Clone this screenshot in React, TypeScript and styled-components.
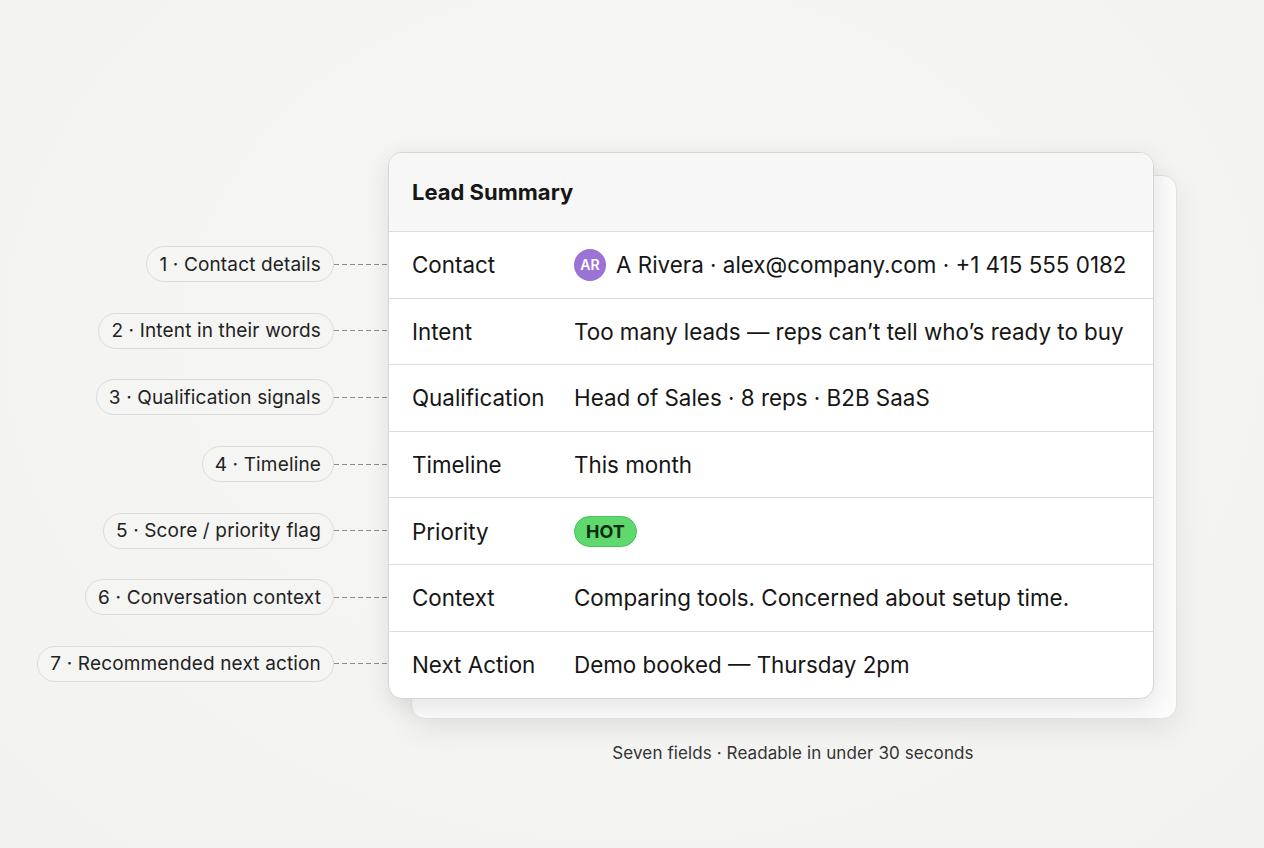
import React from "react";
import styled, { createGlobalStyle } from "styled-components";

const GlobalStyle = createGlobalStyle`
  body {
    margin: 0;
    background: #f4f4f3;
    font-family: Inter, "Noto Sans", sans-serif;
    color: #161616;
  }
`;

const Page = styled.div`
  width: 1264px;
  height: 848px;
  padding-top: 152px;
  box-sizing: border-box;
  display: flex;
  background: radial-gradient(ellipse at 50% 40%, #f7f7f6 0%, #f2f2f1 100%);
`;

const Annotations = styled.div`
  width: 388px;
  padding-top: 79px;
  display: flex;
  flex-direction: column;
  align-items: flex-end;
`;

const AnnotationRow = styled.div`
  height: 66.6px;
  display: flex;
  align-items: center;
`;

const Pill = styled.div`
  height: 34px;
  padding: 0 12px;
  display: flex;
  align-items: center;
  border: 1px solid #dcdcdc;
  border-radius: 18px;
  background: #f5f5f4;
  font-size: 19px;
  letter-spacing: 0.15px;
  color: #222;
  white-space: nowrap;
`;

const Dash = styled.div`
  width: 54px;
  height: 1px;
  background: repeating-linear-gradient(90deg, #8a8a8a 0 5px, transparent 5px 8px);
`;

const Stack = styled.div`
  position: relative;
  display: flex;
  flex-direction: column;
`;

const BackCard = styled.div`
  position: absolute;
  left: 23px;
  top: 23px;
  width: 764px;
  height: 542px;
  background: #fbfbfb;
  border: 1px solid #e2e2e2;
  border-radius: 14px;
  box-shadow: 0 10px 30px rgba(0, 0, 0, 0.08);
`;

const Card = styled.div`
  position: relative;
  width: 764px;
  background: #fff;
  border: 1px solid #d6d6d6;
  border-radius: 14px;
  overflow: hidden;
  box-shadow: 0 6px 24px rgba(0, 0, 0, 0.1);
`;

const Header = styled.div`
  height: 78px;
  padding: 0 23px;
  display: flex;
  align-items: center;
  background: #f7f7f7;
  border-bottom: 1px solid #dcdcdc;
  font-size: 22px;
  font-weight: 700;
`;

const Row = styled.div<{ last?: boolean }>`
  height: 66.6px;
  box-sizing: border-box;
  padding: 0 23px;
  display: flex;
  align-items: center;
  font-size: 22.4px;
  border-bottom: ${(p) => (p.last ? "none" : "1px solid #dcdcdc")};
`;

const Label = styled.div`
  width: 162px;
  flex-shrink: 0;
`;

const Value = styled.div`
  display: flex;
  align-items: center;
  gap: 10px;
  white-space: nowrap;
`;

const Avatar = styled.div`
  width: 32px;
  height: 32px;
  border-radius: 50%;
  background: #9b72d6;
  color: #fff;
  font-size: 14px;
  font-weight: 600;
  display: flex;
  align-items: center;
  justify-content: center;
`;

const Hot = styled.span`
  padding: 4px 11px;
  border-radius: 16px;
  background: #5fd86d;
  border: 1px solid #48c257;
  font-size: 18px;
  font-weight: 700;
  color: #0e2a12;
`;

const Caption = styled.div`
  margin-top: 44px;
  padding-left: 44px;
  text-align: center;
  font-size: 17px;
  letter-spacing: 0.1px;
  color: #333;
`;

const fields: { note: string; label: string; value: React.ReactNode }[] = [
  {
    note: "1 · Contact details",
    label: "Contact",
    value: (
      <>
        <Avatar>AR</Avatar>A Rivera · alex@company.com · +1 415 555 0182
      </>
    ),
  },
  { note: "2 · Intent in their words", label: "Intent", value: "Too many leads — reps can’t tell who’s ready to buy" },
  { note: "3 · Qualification signals", label: "Qualification", value: "Head of Sales · 8 reps · B2B SaaS" },
  { note: "4 · Timeline", label: "Timeline", value: "This month" },
  { note: "5 · Score / priority flag", label: "Priority", value: <Hot>HOT</Hot> },
  { note: "6 · Conversation context", label: "Context", value: "Comparing tools. Concerned about setup time." },
  { note: "7 · Recommended next action", label: "Next Action", value: "Demo booked — Thursday 2pm" },
];

export default function App() {
  return (
    <>
      <GlobalStyle />
      <Page>
        <Annotations>
          {fields.map((f) => (
            <AnnotationRow key={f.note}>
              <Pill>{f.note}</Pill>
              <Dash />
            </AnnotationRow>
          ))}
        </Annotations>
        <Stack>
          <BackCard />
          <Card>
            <Header>Lead Summary</Header>
            {fields.map((f, i) => (
              <Row key={f.label} last={i === fields.length - 1}>
                <Label>{f.label}</Label>
                <Value>{f.value}</Value>
              </Row>
            ))}
          </Card>
          <Caption>Seven fields · Readable in under 30 seconds</Caption>
        </Stack>
      </Page>
    </>
  );
}
